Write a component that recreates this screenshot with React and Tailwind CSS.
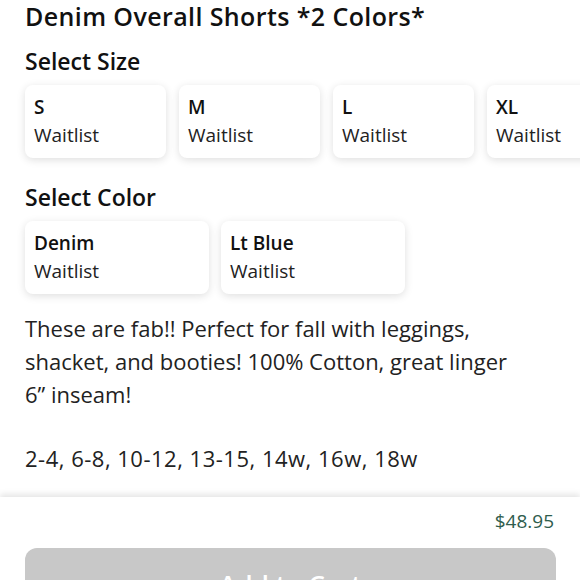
import React from "react";

const sizes = ["S", "M", "L", "XL"];
const colors = ["Denim", "Lt Blue"];

function OptionCard({ label, width }) {
    return (
        <div className={`${width} shrink-0 h-[73px] rounded-lg bg-white shadow-[0_2px_8px_rgba(0,0,0,0.13)] pl-[9px] pt-[8px]`}>
            <p className="text-[19px] leading-[28px] font-semibold text-[#111]">{label}</p>
            <p className="text-[19px] leading-[28px] text-[#222]">Waitlist</p>
        </div>
    )
}

export default function App() {
    return (
        <div className="w-[580px] h-[580px] overflow-hidden bg-white relative" style={{ fontFamily: "'Open Sans', 'Noto Sans', sans-serif" }}>
            <div className="px-[25px]">
                <h1 className="text-[25px] leading-[32px] font-semibold tracking-[0.4px] text-[#111] whitespace-nowrap">Denim Overall Shorts *2 Colors*</h1>

                <h2 className="text-[23px] leading-[28px] font-semibold text-[#111] mt-[15px]">Select Size</h2>
                <div className="flex gap-[13px] mt-[10px]">
                    {sizes.map(s => <OptionCard key={s} label={s} width="w-[141px]" />)}
                </div>

                <h2 className="text-[23px] leading-[28px] font-semibold text-[#111] mt-[25px]">Select Color</h2>
                <div className="flex gap-[12px] mt-[10px]">
                    {colors.map(c => <OptionCard key={c} label={c} width="w-[184px]" />)}
                </div>

                <p className="text-[22px] leading-[33px] text-[#222] mt-[18px] whitespace-nowrap">
                    These are fab!! Perfect for fall with leggings,<br />
                    shacket, and booties! 100% Cotton, great linger<br />
                    6” inseam!
                </p>
                <p className="text-[22px] leading-[33px] text-[#222] mt-[31px] tracking-[0.5px]">2-4, 6-8, 10-12, 13-15, 14w, 16w, 18w</p>
            </div>

            <div className="absolute left-0 right-0 top-[497px] bottom-0 bg-white shadow-[0_-3px_6px_rgba(0,0,0,0.1)] px-[25px]">
                <p className="text-right pr-px text-[19px] leading-[28px] text-[#2f5d4d] mt-[10px]">$48.95</p>
                <button className="w-[531px] h-[60px] rounded-xl bg-[#c8c8c8] text-white text-[26px] font-semibold mt-[13px] pt-[20px] leading-[32px] flex justify-center items-start">Add to Cart</button>
            </div>
        </div>
    )
}
